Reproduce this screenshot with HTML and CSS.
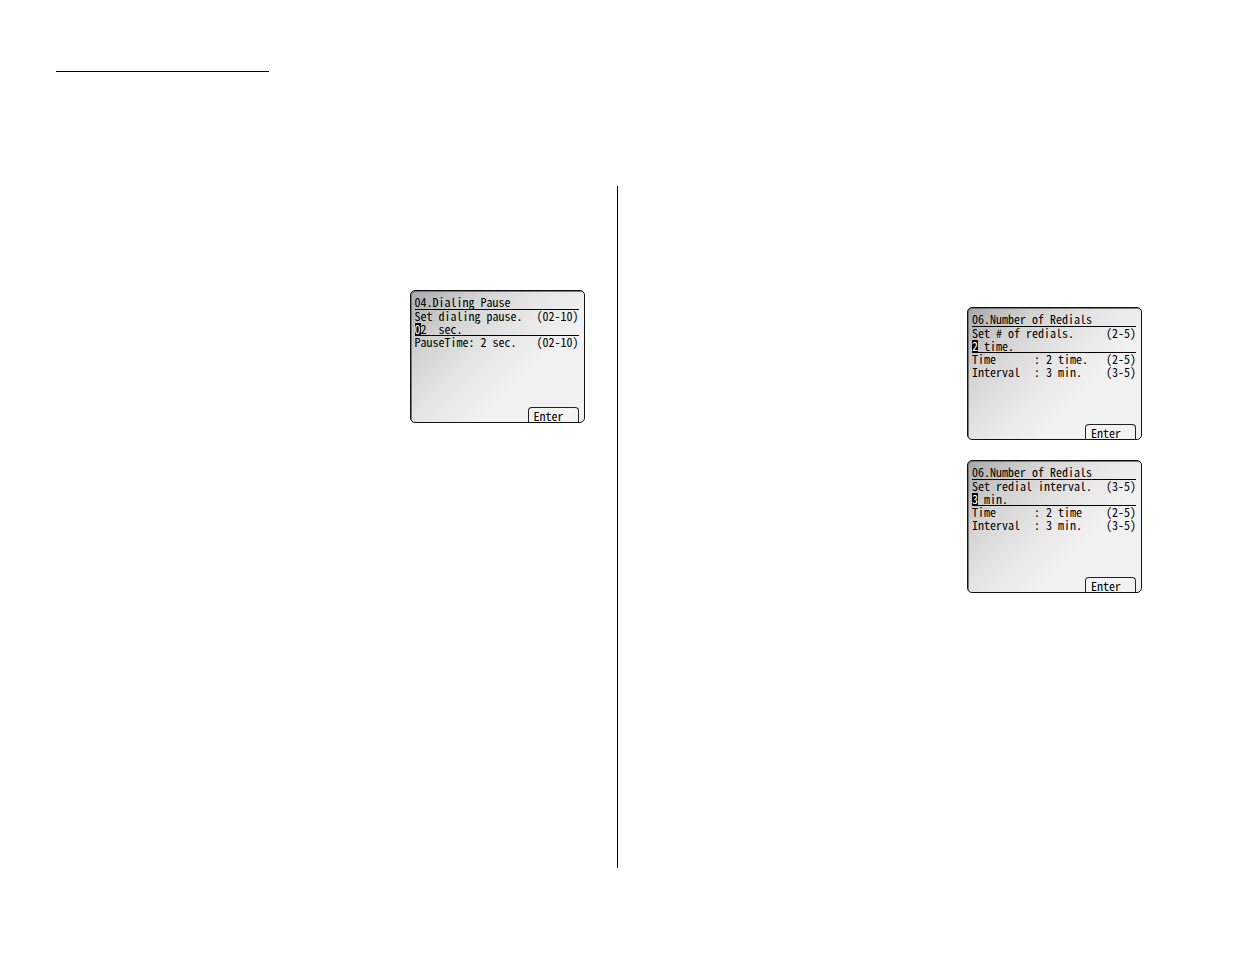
FILE: index.html
```html
<!DOCTYPE html>
<html lang="en">
<head>
<meta charset="utf-8">
<title>Dialing Pause and Number of Redials</title>
<link rel="stylesheet" href="styles.css">
</head>
<body>
<header class="page-header"><hr class="header-rule"></header>
<main class="columns">
  <section class="column column-left">
    <article class="screen">
      <h2 class="title">04.Dialing Pause</h2>
      <div class="entry">
        <p class="row"><span>Set dialing pause.</span><span>(02-10)</span></p>
        <p class="row"><span><mark class="cursor">0</mark>2  sec.</span></p>
      </div>
      <p class="row"><span>PauseTime: 2 sec.</span><span>(02-10)</span></p>
      <button class="soft-key" type="button">Enter</button>
    </article>
  </section>
  <section class="column column-right">
    <article class="screen">
      <h2 class="title">06.Number of Redials</h2>
      <div class="entry">
        <p class="row"><span>Set # of redials.</span><span>(2-5)</span></p>
        <p class="row"><span><mark class="cursor">2</mark> time.</span></p>
      </div>
      <p class="row"><span class="label">Time</span><span class="value">: 2 time.</span><span>(2-5)</span></p>
      <p class="row"><span class="label">Interval</span><span class="value">: 3 min.</span><span>(3-5)</span></p>
      <button class="soft-key" type="button">Enter</button>
    </article>
    <article class="screen">
      <h2 class="title">06.Number of Redials</h2>
      <div class="entry">
        <p class="row"><span>Set redial interval.</span><span>(3-5)</span></p>
        <p class="row"><span><mark class="cursor">3</mark> min.</span></p>
      </div>
      <p class="row"><span class="label">Time</span><span class="value">: 2 time</span><span>(2-5)</span></p>
      <p class="row"><span class="label">Interval</span><span class="value">: 3 min.</span><span>(3-5)</span></p>
      <button class="soft-key" type="button">Enter</button>
    </article>
  </section>
</main>
</body>
</html>
```
FILE: styles.css
```css
* {
  box-sizing: border-box;
}

body {
  display: flex;
  flex-direction: column;
  min-height: 100vh;
  margin: 0;
  padding: 71px 0 86px;
  background: #fff;
  color: #000;
}

.page-header {
  padding: 0 56px 114px;
}

.header-rule {
  width: 213px;
  height: 1px;
  margin: 0;
  border: 0;
  background: #000;
}

.columns {
  display: grid;
  flex: 1;
  grid-template-columns: 1fr 1fr;
}

.column {
  display: flex;
  flex-direction: column;
  align-items: flex-end;
  gap: 20px;
}

.column-left {
  padding: 104px 32px 0 56px;
  border-right: 1px solid #000;
}

.column-right {
  padding: 121px 93px 0 32px;
}

.screen {
  display: flex;
  flex-direction: column;
  width: 175px;
  min-height: 133px;
  padding: 4px 5px 0 4px;
  border: 1px solid #111;
  border-radius: 5px;
  box-shadow: inset 1px 1px #777;
  background: linear-gradient(135deg, #a8a8a8 0%, #d2d2d2 22%, #e6e6e6 45%, #f1f1f1 65%, #f1f1f1 100%);
  font: 12px/11px "Noto Sans Mono CJK JP", "DejaVu Sans Mono", monospace;
}

.title {
  margin: 0;
  padding: 1px 0 2px;
  border-bottom: 1px solid #000;
  font: inherit;
  white-space: pre;
}

.entry {
  height: 26px;
  border-bottom: 1px solid #000;
}

.row {
  display: flex;
  justify-content: space-between;
  height: 13px;
  margin: 0;
  white-space: pre;
}

.label {
  width: 62px;
}

.value {
  flex: 1;
}

.cursor {
  display: inline-block;
  height: 12px;
  background: #000;
  color: #fff;
  vertical-align: top;
}

.soft-key {
  align-self: flex-end;
  width: 51px;
  height: 15px;
  margin: auto 0 0;
  padding: 0 5px;
  border: 1px solid #222;
  border-bottom: 0;
  border-radius: 4px 4px 0 0;
  background: #f3f3f3;
  color: inherit;
  font: inherit;
  text-align: left;
}
```
